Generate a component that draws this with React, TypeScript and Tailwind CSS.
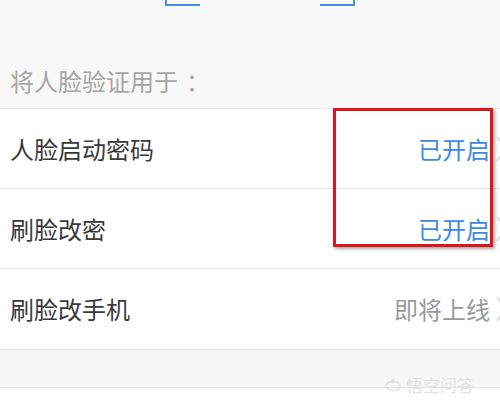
import React from 'react';

const Chevron: React.FC = () => (
    <svg width="14" height="26" viewBox="0 0 14 26" className="shrink-0">
        <path d="M2 1 L10 13 L2 25" fill="none" stroke="#cfcfcf" strokeWidth="1.3" />
    </svg>
);

interface RowProps {
    title: string;
    status: string;
    active?: boolean;
    last?: boolean;
}

const Row: React.FC<RowProps> = ({ title, status, active, last }) => (
    <div className={`flex h-[80px] items-center justify-between pl-[10px] ${last ? '' : 'border-b border-[#e6e6e6]'}`}>
        <span className="text-[24px] text-[#3a3a3a]">{title}</span>
        <div className="mr-[-9px] flex items-center gap-[5px]">
            <span className={`text-[24px] ${active ? 'text-[#3d8ae2]' : 'text-[#9a9a9a]'}`}>{status}</span>
            <Chevron />
        </div>
    </div>
);

export default function App() {
    return (
        <div
            className="relative h-[400px] w-[500px] overflow-hidden bg-[#f8f8f8]"
            style={{ fontFamily: '"Noto Sans CJK SC", "Noto Sans", sans-serif' }}
        >
            {/* top scan frame corners */}
            <div className="flex h-[7px] gap-[120px] pl-[165px]">
                <div className="h-[6px] w-[35px] border-b-2 border-l-2 border-[#4a8ee6]" />
                <div className="h-[6px] w-[35px] border-b-2 border-r-2 border-[#4a8ee6]" />
            </div>
            <div className="flex h-[101px] items-center pl-[10px] pt-[46px]">
                <span className="text-[24px] text-[#a6a6a6]">
                    将人脸验证用于<span className="ml-[8px]">：</span>
                </span>
            </div>

            <div className="border-y border-[#e6e6e6] bg-white">
                <Row title="人脸启动密码" status="已开启" active />
                <Row title="刷脸改密" status="已开启" active />
                <Row title="刷脸改手机" status="即将上线" last />
            </div>

            <div className="h-[38px] border-b border-[#e2e2e2] bg-[#f7f7f7]" />
            <div className="flex h-[20px] items-start justify-end bg-white pr-[26px]">
                <span className="-mt-[16px] flex items-center gap-[4px] text-[17px] text-[#e2e2e2]">
                    <svg width="18" height="14" viewBox="0 0 18 14">
                        <ellipse cx="9" cy="8" rx="7" ry="4.5" fill="none" stroke="#e0e0e0" strokeWidth="1.5" />
                        <circle cx="9" cy="3" r="2" fill="#e0e0e0" />
                    </svg>
                    悟空问答
                </span>
            </div>

            {/* red highlight box */}
            <div className="absolute left-[333px] top-[108px] h-[139px] w-[160px] border-[3px] border-[#e0141a] shadow-[2px_2px_3px_rgba(0,0,0,0.35)]" />
        </div>
    );
}
